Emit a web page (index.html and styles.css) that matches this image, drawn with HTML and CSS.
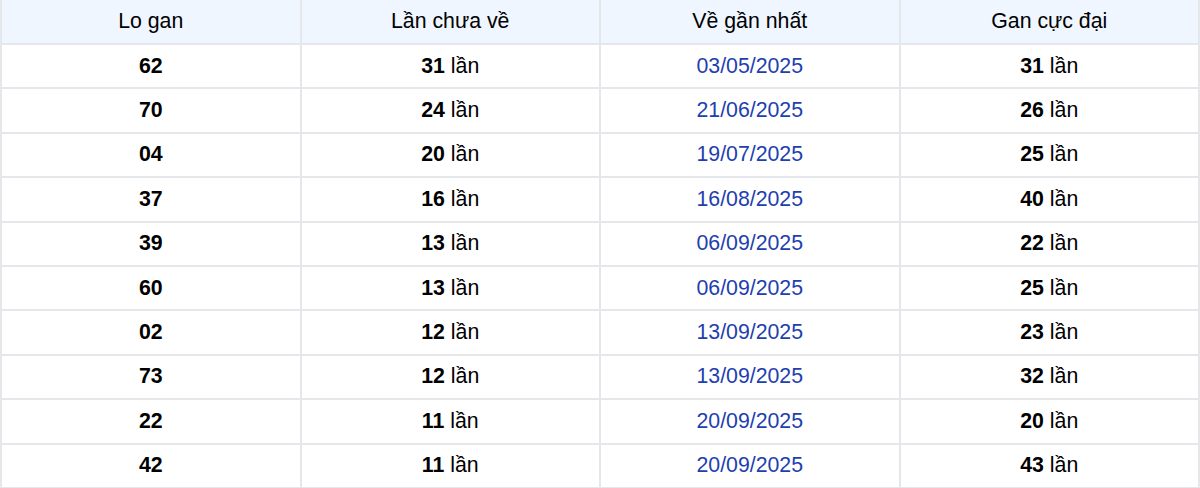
FILE: index.html
```html
<!DOCTYPE html>
<html lang="vi">
<head>
<meta charset="utf-8">
<title>Lo gan</title>
<link rel="stylesheet" href="styles.css">
</head>
<body>
<table class="gan-table">
  <thead>
    <tr>
      <th>Lo gan</th>
      <th>Lần chưa về</th>
      <th>Về gần nhất</th>
      <th>Gan cực đại</th>
    </tr>
  </thead>
  <tbody>
    <tr><td><b>62</b></td><td><b>31</b> lần</td><td class="date">03/05/2025</td><td><b>31</b> lần</td></tr>
    <tr><td><b>70</b></td><td><b>24</b> lần</td><td class="date">21/06/2025</td><td><b>26</b> lần</td></tr>
    <tr><td><b>04</b></td><td><b>20</b> lần</td><td class="date">19/07/2025</td><td><b>25</b> lần</td></tr>
    <tr><td><b>37</b></td><td><b>16</b> lần</td><td class="date">16/08/2025</td><td><b>40</b> lần</td></tr>
    <tr><td><b>39</b></td><td><b>13</b> lần</td><td class="date">06/09/2025</td><td><b>22</b> lần</td></tr>
    <tr><td><b>60</b></td><td><b>13</b> lần</td><td class="date">06/09/2025</td><td><b>25</b> lần</td></tr>
    <tr><td><b>02</b></td><td><b>12</b> lần</td><td class="date">13/09/2025</td><td><b>23</b> lần</td></tr>
    <tr><td><b>73</b></td><td><b>12</b> lần</td><td class="date">13/09/2025</td><td><b>32</b> lần</td></tr>
    <tr><td><b>22</b></td><td><b>11</b> lần</td><td class="date">20/09/2025</td><td><b>20</b> lần</td></tr>
    <tr><td><b>42</b></td><td><b>11</b> lần</td><td class="date">20/09/2025</td><td><b>43</b> lần</td></tr>
  </tbody>
</table>
</body>
</html>
```

FILE: styles.css
```css
html, body {
  margin: 0;
  padding: 0;
  background: #ffffff;
}

.gan-table {
  width: 1200px;
  table-layout: fixed;
  border-collapse: collapse;
  font-family: "Liberation Sans", Arial, sans-serif;
  font-size: 21.3px;
  color: #000000;
}

.gan-table th,
.gan-table td {
  border: 2px solid #e5e7eb;
  text-align: center;
  vertical-align: middle;
  padding: 0;
}

.gan-table thead tr:first-child th {
  border-top: 0;
}

.gan-table th {
  height: 43px;
  background: #eff6ff;
  font-weight: normal;
}

.gan-table td {
  height: 42.4px;
}

.gan-table b {
  font-weight: bold;
}

.gan-table .date {
  color: #1e40af;
}
```
